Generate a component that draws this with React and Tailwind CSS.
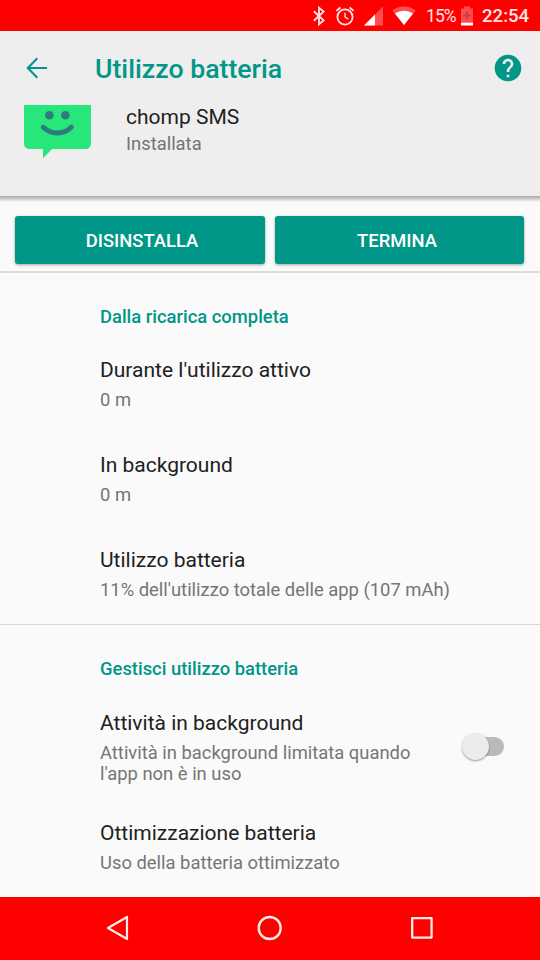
import React, { useState } from 'react';

const usageItems = [
  { title: "Durante l'utilizzo attivo", value: '0 m' },
  { title: 'In background', value: '0 m' },
  { title: 'Utilizzo batteria', value: "11% dell'utilizzo totale delle app (107 mAh)" },
];

function StatusBar() {
  return (
    <div className="h-[31px] shrink-0 bg-[#ff0000] flex items-center pl-[312px] text-white/90">
      {/* Bluetooth */}
      <svg className="w-[14px] h-[20px] shrink-0" viewBox="0 0 14 20" fill="none" stroke="currentColor" strokeWidth="1.9">
        <path d="M1.8 5.2 11.6 14.4 7 18.2V1.8L11.6 5.6 1.8 14.8" />
      </svg>
      {/* Sveglia */}
      <svg className="w-[20px] h-[20px] ml-[9px] shrink-0" viewBox="0 0 20 20" fill="none" stroke="currentColor" strokeWidth="1.8">
        <circle cx="10" cy="11" r="7.6" />
        <path d="M10 6.7V11l3.3 2.2" strokeWidth="1.4" />
        <path d="M1.3 4.9 5.4 1.5M18.7 4.9 14.6 1.5" />
      </svg>
      {/* Segnale */}
      <svg className="w-[19px] h-[20px] ml-[9px] shrink-0" viewBox="0 0 19 20">
        <path d="M0 19.5 19 .5v19z" fill="#fff" fillOpacity=".3" />
        <path d="M0 19.5 11 8.5v11z" fill="#fff" />
      </svg>
      {/* Wi-Fi */}
      <svg className="w-[24px] h-[20px] ml-[9px] shrink-0" viewBox="0 0 24 20">
        <path d="M12 19 .3 4.4C3.4 1.9 7.4.5 12 .5s8.6 1.4 11.7 3.9z" fill="#fff" fillOpacity=".3" />
        <path d="M12 19 2.9 7.6C5.6 5.7 8.6 4.7 12 4.7s6.4 1 9.1 2.9z" fill="#fff" />
      </svg>
      <span className="ml-[10px] mt-[2px] w-[30px] text-[17.5px] leading-none whitespace-nowrap tracking-[-0.9px]">15%</span>
      {/* Batteria */}
      <svg className="w-[12px] h-[20px] ml-[5px] shrink-0" viewBox="0 0 12 20">
        <path d="M3 .5h6v2h3V16H0V2.5h3z" fill="#ff4d4d" />
        <path d="M0 16.500h12v3H0z" fill="#fff" />
        <path d="M5 6h2v2.500h3v2H7V13H5v-2.500H2v-2h3z" fill="#cc3d3d" />
      </svg>
      <span className="ml-[9px] mt-[2px] text-[18.6px] font-medium leading-none">22:54</span>
    </div>
  );
}

function Toolbar() {
  return (
    <div className="h-[74px] flex items-center pl-[26px] pr-[16px]">
      <svg className="w-[22px] h-[22px]" viewBox="0 0 22 22" fill="none" stroke="#009688" strokeWidth="2.1">
        <path d="M21 11H2M11.3 1.3 1.8 11l9.5 9.7" />
      </svg>
      <h1 className="ml-[47px] mt-[2px] flex-1 text-[26.7px] font-medium leading-none text-[#009688]">Utilizzo batteria</h1>
      <svg className="w-[32px] h-[32px]" viewBox="0 0 24 24" fill="#009688">
        <path d="M12 2C6.48 2 2 6.48 2 12s4.48 10 10 10 10-4.48 10-10S17.52 2 12 2zm1 17h-2v-2h2v2zm2.07-7.75l-.9.92C13.45 12.9 13 13.5 13 15h-2v-.5c0-1.1.45-2.1 1.17-2.83l1.24-1.26c.37-.36.59-.86.59-1.41 0-1.1-.9-2-2-2s-2 .9-2 2H8c0-2.21 1.79-4 4-4s4 1.79 4 4c0 .88-.36 1.68-.93 2.25z" />
      </svg>
    </div>
  );
}

function AppHeader() {
  return (
    <div className="h-[91px] flex items-start pl-[24px]">
      <svg className="w-[67px] h-[54px]" viewBox="0 0 67 54">
        <path d="M0 0h67v38.5a5.5 5.5 0 0 1-5.5 5.5H28l-9 9.2V44H5.5A5.5 5.5 0 0 1 0 38.5z" fill="#27e67a" />
        <circle cx="25.4" cy="10.3" r="4.3" fill="#2e7a80" />
        <circle cx="41.4" cy="10.3" r="4.3" fill="#2e7a80" />
        <path d="M19.3 22.2c8.2 7.7 19.8 7.7 28 0" fill="none" stroke="#2e7a80" strokeWidth="5" strokeLinecap="round" />
      </svg>
      <div className="ml-[35px]">
        <p className="text-[21px] leading-[25px] text-[#212121]">chomp SMS</p>
        <p className="mt-[3px] text-[18.4px] leading-[22px] text-[#737373]">Installata</p>
      </div>
    </div>
  );
}

function Preference({ title, value, children }) {
  return (
    <div className="flex items-center pl-[100px] pr-[36px]">
      <div className="flex-1">
        <p className="text-[21px] leading-[25px] text-[#212121]">{title}</p>
        <p className="mt-[6px] text-[18.4px] leading-[21.5px] text-[#757575]">{value}</p>
      </div>
      {children}
    </div>
  );
}

function SectionTitle({ children }) {
  return <h2 className="pl-[100px] text-[18.4px] font-medium leading-[22px] text-[#009688]">{children}</h2>;
}

function NavBar() {
  return (
    <div className="h-[63px] shrink-0 bg-[#ff0000] flex items-center justify-between px-[106px] pb-[1px]">
      <svg className="w-[24px] h-[26px]" viewBox="0 0 24 26" fill="none" stroke="#ffe9e9" strokeWidth="2.2" strokeLinejoin="round">
        <path d="M21 2v22L2 13z" />
      </svg>
      <svg className="w-[26px] h-[26px]" viewBox="0 0 26 26" fill="none" stroke="#ffe9e9" strokeWidth="2.4">
        <circle cx="12.7" cy="13" r="11" />
      </svg>
      <svg className="w-[24px] h-[24px]" viewBox="0 0 24 24" fill="none" stroke="#ffe9e9" strokeWidth="2.3" strokeLinejoin="round">
        <path d="M2.2 2.2h19.4v19.4H2.2z" />
      </svg>
    </div>
  );
}

export default function App() {
  const [bgActive, setBgActive] = useState(false);

  return (
    <div className="w-[540px] h-[960px] flex flex-col overflow-hidden bg-[#fafafa] font-[Roboto,sans-serif]">
      <StatusBar />
      <header className="shrink-0 bg-[#eeeeee]">
        <Toolbar />
        <AppHeader />
      </header>
      <div className="h-[6px] shrink-0 bg-linear-to-b from-[#a8a8a8] to-[#fafafa]" />

      <main className="flex-1 min-h-0 overflow-hidden">
        {/* Azioni */}
        <div className="flex gap-[10px] pt-[14px] pb-[7px] pl-[15px] pr-[16px] border-b-2 border-[#dcdcdc]">
          <button className="w-[250px] h-[48px] pl-[4px] pt-[2px] rounded-[3px] bg-[#009688] text-white text-[18.4px] font-medium shadow-[0_1px_3px_rgba(0,0,0,0.35)]">
            DISINSTALLA
          </button>
          <button className="w-[249px] h-[48px] pr-[5px] pt-[2px] rounded-[3px] bg-[#009688] text-white text-[18.4px] font-medium shadow-[0_1px_3px_rgba(0,0,0,0.35)]">
            TERMINA
          </button>
        </div>

        <section className="h-[352px] pt-[33px] border-b border-[#d9d9d9]">
          <SectionTitle>Dalla ricarica completa</SectionTitle>
          <div className="mt-[30px] flex flex-col gap-[42.5px]">
            {usageItems.map((item) => (
              <Preference key={item.title} title={item.title} value={item.value} />
            ))}
          </div>
        </section>

        <section className="pt-[33px]">
          <SectionTitle>Gestisci utilizzo batteria</SectionTitle>
          <div className="mt-[30.5px] flex flex-col gap-[36.5px]">
            <Preference
              title="Attività in background"
              value={<>Attività in background limitata quando<br />l'app non è in uso</>}
            >
              <button
                role="switch"
                aria-checked={bgActive}
                onClick={() => setBgActive(!bgActive)}
                className={`w-[42px] h-[27px] mb-[2px] flex items-center ${bgActive ? 'flex-row-reverse' : ''}`}
              >
                <span className="w-[27px] h-[27px] shrink-0 rounded-full bg-[#ececec] shadow-[0_1px_2px_rgba(0,0,0,0.4)] z-10" />
                <span className="w-[28px] h-[19px] shrink-0 -ml-[13px] rounded-full bg-[#b9b9b9]" />
              </button>
            </Preference>
            <Preference title="Ottimizzazione batteria" value="Uso della batteria ottimizzato" />
          </div>
        </section>
      </main>

      <NavBar />
    </div>
  );
}
